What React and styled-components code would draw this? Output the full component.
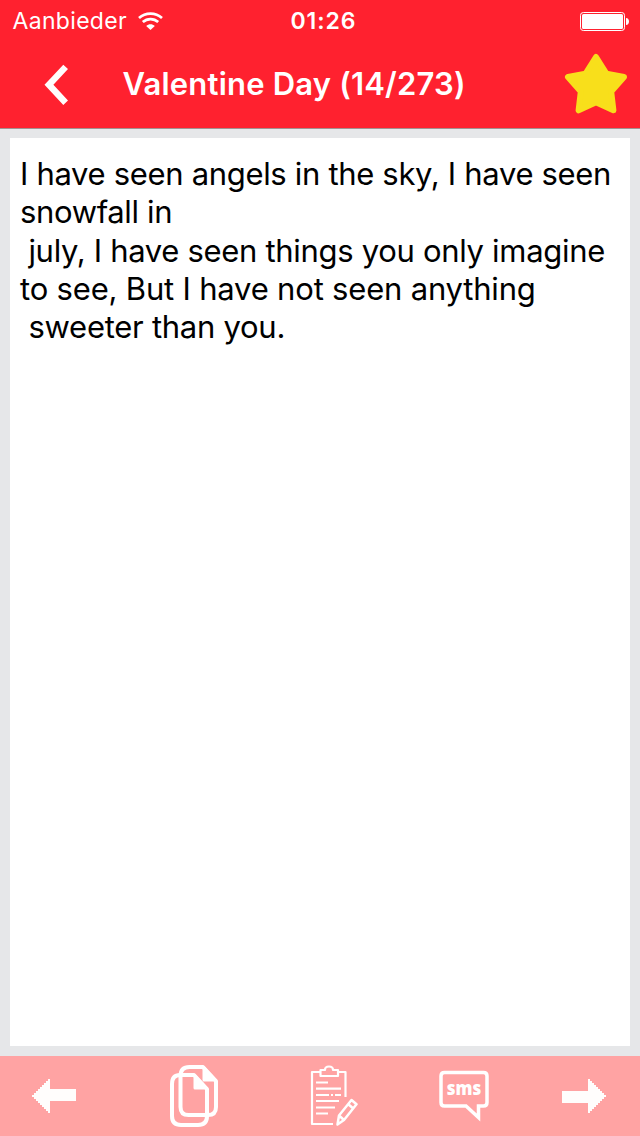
import React from "react";
import styled, { createGlobalStyle } from "styled-components";

const GlobalStyle = createGlobalStyle`
  * { box-sizing: border-box; }
  body { margin: 0; background: #e6e7e9; font-family: Inter, "Liberation Sans", sans-serif; }
  svg { display: block; }
`;

const Screen = styled.div`
  width: 640px;
  height: 1136px;
  display: flex;
  flex-direction: column;
  background: #e6e7e9;
  overflow: hidden;
`;

const Header = styled.header`
  height: 129px;
  flex: none;
  background: #ff212f;
  border-bottom: 1px solid #a3908f;
  color: #fff;
`;

const StatusBar = styled.div`
  height: 40px;
  display: grid;
  grid-template-columns: 290.5px 1fr 60px;
  align-items: center;
  font-size: 23px;
  line-height: 40px;
`;

const Carrier = styled.div`
  display: flex;
  align-items: center;
  gap: 11px;
  padding: 1px 0 0 12.5px;
  letter-spacing: 0.32px;
`;

const Clock = styled.time`
  padding-top: 1px;
  font-weight: 600;
  letter-spacing: 0.95px;
`;

const NavBar = styled.nav`
  height: 88px;
  display: grid;
  grid-template-columns: 122.5px 1fr 76px;
  align-items: center;
`;

const IconButton = styled.button`
  display: flex;
  align-items: center;
  justify-content: center;
  padding: 0;
  border: 0;
  background: none;
  color: #fffdfc;
  height: 100%;
`;

const BackButton = styled(IconButton)`
  justify-content: flex-start;
  padding: 2px 0 0 44px;
`;

const StarButton = styled(IconButton)`
  justify-content: flex-start;
`;

const Title = styled.h1`
  margin: 0;
  font-size: 31px;
  line-height: 40px;
  font-weight: 600;
  letter-spacing: ${(p) => p.$spacing}px;
  white-space: nowrap;
`;

const Message = styled.main`
  flex: 1;
  margin: 9px 10px 10px;
  padding: 17px 10px;
  background: #fff;
  color: #000;
`;

const Line = styled.div`
  font-size: 31px;
  line-height: 38.25px;
  letter-spacing: ${(p) => p.$spacing}px;
  white-space: pre;
`;

const Toolbar = styled.footer`
  height: 80px;
  flex: none;
  display: grid;
  grid-template-columns: 108px 172px 108px 152px 88px;
  background: #ffa3a3;
`;

const lines = [
  { text: "I have seen angels in the sky, I have seen", spacing: -0.32 },
  { text: "snowfall in", spacing: -0.35 },
  { text: " july, I have seen things you only imagine", spacing: -0.31 },
  { text: "to see, But I have not seen anything", spacing: -0.19 },
  { text: " sweeter than you.", spacing: -0.27 },
];

const WifiIcon = () => (
  <svg width="25" height="18" viewBox="0 0 25 18" fill="none" stroke="#fff" strokeWidth="2.7">
    <path d="M1 6.1C7.5 .1 17.5 .1 24 6.1" />
    <path d="M4.8 10.1C9.2 6 15.8 6 20.2 10.1" />
    <path d="M8.2 14C10.7 11.7 14.3 11.7 16.8 14L12.5 18Z" fill="#fff" stroke="none" />
  </svg>
);

const BatteryIcon = () => (
  <svg width="50" height="18" viewBox="0 0 50 18" overflow="visible">
    <rect x=".5" y=".5" width="44" height="18" rx="2.8" fill="none" stroke="#fff" />
    <rect x="2" y="2" width="41" height="15" rx="1.5" fill="#fff" />
    <path d="M46 6c4 0 4 7 0 7Z" fill="#fff" />
  </svg>
);

const BackIcon = () => (
  <svg width="25" height="42" viewBox="0 0 25 42">
    <path d="M19.3 .8L24 5 9.4 20.8 24 36.600 19.3 41 .5 20.8Z" fill="currentColor" />
  </svg>
);

const StarIcon = () => (
  <svg width="64" height="62" viewBox="0 0 64 62">
    <path
      d="M32 4L42.5 20.8 60 24 47.2 38.5 49.4 57.3 32 49.3 14.6 57.3 16.8 38.5 4 24 21.5 20.8Z"
      fill="#f8df1b"
      stroke="#f8df1b"
      strokeWidth="6"
      strokeLinejoin="round"
    />
  </svg>
);

const ArrowLeftIcon = () => (
  <svg width="44" height="34" viewBox="0 0 44 34" shapeRendering="crispEdges">
    <path
      d="M0 16h2v-2h2v-2h2v-2h2v-2h2v-2h2v-2h2v-2h2v-2h2v10h26v12h-26v12h-2v-2h-2v-2h-2v-2h-2v-2h-2v-2h-2v-2h-2v-2h-2v-2h-2z"
      fill="currentColor"
    />
  </svg>
);

const ArrowRightIcon = () => (
  <svg width="44" height="34" viewBox="0 0 44 34" shapeRendering="crispEdges">
    <path
      d="M0 12h26v-12h2v2h2v2h2v2h2v2h2v2h2v2h2v2h2v2h2v2h-2v2h-2v2h-2v2h-2v2h-2v2h-2v2h-2v2h-2v2h-2v-10h-26z"
      fill="currentColor"
    />
  </svg>
);

const CopyIcon = () => (
  <svg width="48" height="64" viewBox="0 0 48 64" fill="none" stroke="#fff" strokeWidth="4" strokeLinejoin="round">
    <path d="M10 11h14l13 14v27q0 9-9 9H11q-9 0-9-9V20q0-9 8-9Z" />
    <path d="M10.5 12q0-9 9-9H33l13 14v26q0 8-8 8H18.500q-8 0-8-8Z" />
    <path d="M25 12v12h11Z M34 4v12h11Z" fill="#fff" strokeWidth="3" />
  </svg>
);

const NoteIcon = () => (
  <svg width="48" height="62" viewBox="0 0 48 62" fill="none" stroke="#fff" strokeWidth="2.2" strokeLinejoin="round">
    <path d="M10 7H2v52h21M28 7h7.500v25M10.500 11V5h4.500q0-3.500 4-3.500t4 3.500h5v6Z" />
    <path d="M6 17.500h12M6 23.700h25M6 30h13M21 30h2M25 30h6M6 36h23M6 42.500h19M6 48.500h12" />
    <path d="M27.500 59.500l1.500-9L41.500 35l5 4.300L34 55ZM29 50.500l5 4.500M38 39l5 4.300" strokeWidth="2.5" />
  </svg>
);

const SmsIcon = () => (
  <svg width="52" height="52" viewBox="0 0 52 52">
    <path
      d="M6.500 2.500h39q3.500 0 3.500 3.500v26.500q0 3.500-3.500 3.500h-5v11.500L28 36H6.500q-3.500 0-3.500-3.500V6q0-3.500 3.500-3.500Z"
      fill="none"
      stroke="#fff"
      strokeWidth="3.500"
    />
    <text x="26" y="24.500" textAnchor="middle" fill="#fff" fontFamily="Open Sans, sans-serif" fontSize="19" fontWeight="800" textLength="34.500" lengthAdjust="spacingAndGlyphs">
      sms
    </text>
  </svg>
);

export default function App() {
  return (
    <Screen>
      <GlobalStyle />
      <Header>
        <StatusBar>
          <Carrier>
            Aanbieder
            <WifiIcon />
          </Carrier>
          <Clock>01:26</Clock>
          <BatteryIcon />
        </StatusBar>
        <NavBar>
          <BackButton aria-label="Back"><BackIcon /></BackButton>
          <Title $spacing={0.2}>Valentine Day (14/273)</Title>
          <StarButton aria-label="Favourite"><StarIcon /></StarButton>
        </NavBar>
      </Header>
      <Message>
        {lines.map((l) => (
          <Line key={l.text} $spacing={l.spacing}>{l.text}</Line>
        ))}
      </Message>
      <Toolbar>
        <IconButton aria-label="Previous"><ArrowLeftIcon /></IconButton>
        <IconButton aria-label="Copy"><CopyIcon /></IconButton>
        <IconButton aria-label="Edit"><NoteIcon /></IconButton>
        <IconButton aria-label="Send SMS"><SmsIcon /></IconButton>
        <IconButton aria-label="Next"><ArrowRightIcon /></IconButton>
      </Toolbar>
    </Screen>
  );
}
